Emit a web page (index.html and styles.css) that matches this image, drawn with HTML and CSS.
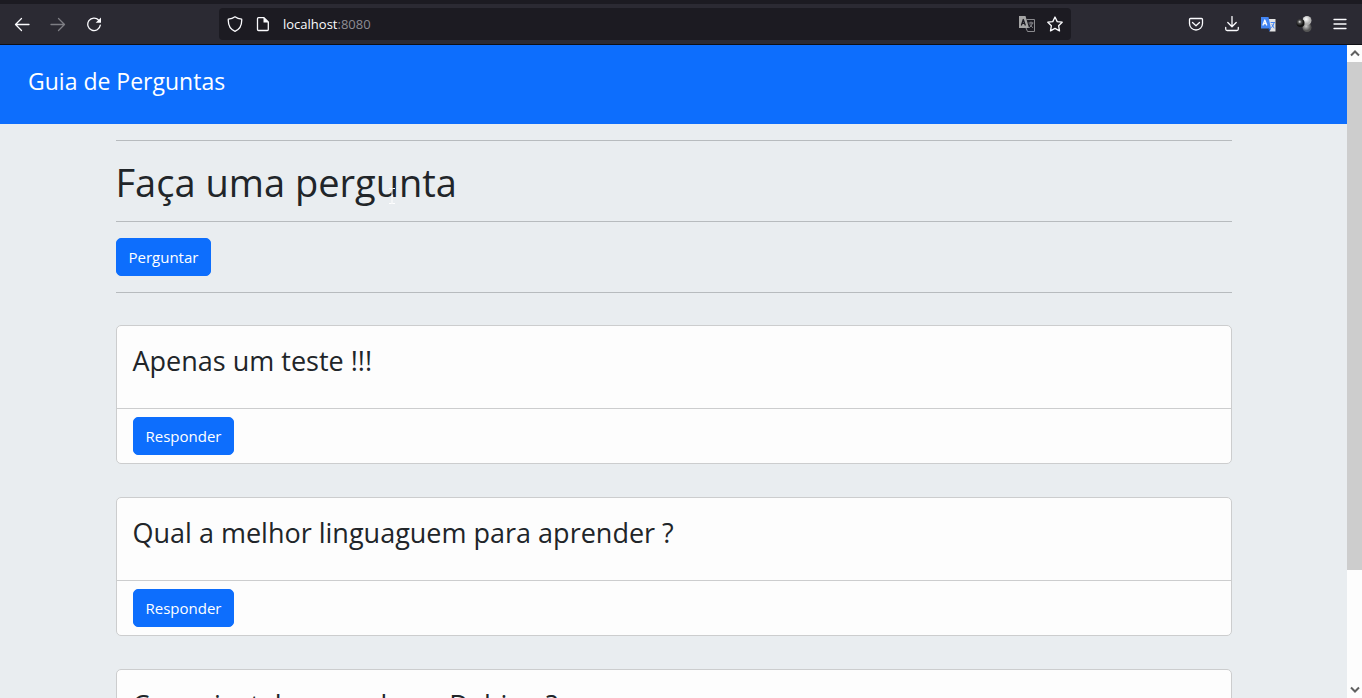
FILE: index.html
```html
<!DOCTYPE html>
<html lang="pt-br">
<head>
    <meta charset="UTF-8">
    <meta name="viewport" content="width=device-width, initial-scale=1.0">
    <title>Guia de Perguntas</title>
    <link rel="stylesheet" href="styles.css">
</head>
<body>

<div class="toolbar">
    <div class="nav-buttons">
        <button type="button" aria-label="Voltar">
            <svg width="16" height="16" viewBox="0 0 16 16"><path d="M15 8.500H1.500M7.500 2.500L1.500 8.500L7.500 14.500"/></svg>
        </button>
        <button type="button" class="disabled" aria-label="Avançar">
            <svg width="16" height="16" viewBox="0 0 16 16"><path d="M1 8.500H14.500M8.500 2.500L14.500 8.500L8.500 14.500"/></svg>
        </button>
        <button type="button" aria-label="Recarregar">
            <svg width="16" height="16" viewBox="0 0 16 16"><path d="M12.800 4.200A6.300 6.300 0 1 0 14.300 9.200"/><path class="arrow" d="M15 1.500V6.800H9.700Z"/></svg>
        </button>
    </div>
    <div class="urlbar">
        <svg width="16" height="16" viewBox="0 0 16 16"><path d="M8 .8C6 2.300 3.500 3 1.300 3.200C1 9 3.300 13.500 8 15.300C12.700 13.500 15 9 14.700 3.200C12.500 3 10 2.300 8 .8Z"/></svg>
        <svg width="16" height="16" viewBox="0 0 16 16"><path d="M3.500 1.700H9L13.300 6V13.500Q13.300 14.500 12.300 14.500H3.500Q2.500 14.500 2.500 13.500V2.700Q2.500 1.700 3.500 1.700Z"/><path class="arrow" d="M8.500 1.500V6.500H13.500Z"/></svg>
        <span class="url">localhost<span class="port">:8080</span></span>
        <button type="button" aria-label="Traduzir">
            <svg width="16" height="16" viewBox="0 0 16 16"><path class="tr-back" d="M8 3.500H15.500V15.500H8.500L7 12"/><path class="tr-front" d="M0 0H6.500L10 12H0Z"/><path class="tr-letter" d="M2.500 9L4.300 3.500L6.200 9M3.200 7.300H5.600"/><path class="tr-sign" d="M10 7H14M12 6V7M13.500 7Q13 10 10.500 11.500M11 8.500L13.500 11.500"/></svg>
        </button>
        <button type="button" aria-label="Favoritos">
            <svg width="16" height="16" viewBox="0 0 16 16"><path d="M8 1L10.200 5.600L15.200 6.200L11.600 9.700L12.500 14.900L8 12.400L3.500 14.900L4.400 9.700L.8 6.200L5.800 5.600Z"/></svg>
        </button>
    </div>
    <div class="tools">
        <button type="button" aria-label="Pocket">
            <svg width="16" height="16" viewBox="0 0 16 16"><path d="M2.500 2.500H13.500Q14.500 2.500 14.500 3.500V7.500A6.500 6.500 0 0 1 1.500 7.500V3.500Q1.500 2.500 2.500 2.500ZM4.500 6.500L8 9.700L11.500 6.500"/></svg>
        </button>
        <button type="button" aria-label="Downloads">
            <svg width="16" height="16" viewBox="0 0 16 16"><path d="M8 .5V10.500M3.800 6.500L8 10.700L12.200 6.500M1.700 11.500V13Q1.700 14.500 3.200 14.500H12.800Q14.300 14.500 14.300 13V11.500"/></svg>
        </button>
        <button type="button" aria-label="Tradutor">
            <svg width="16" height="16" viewBox="0 0 16 16"><path class="tb-back" d="M8 3H15.500V15.500H9.500Z"/><path class="tb-front" d="M1 1H8.500L11 12.500H1Z"/><path class="tb-fold" d="M8 12.500H11L9.500 15.500Z"/><path class="tb-letter" d="M3 9L4.800 4L6.700 9M3.700 7.500H6"/><path class="tb-sign" d="M11 6.500H14.500M14 7Q13.500 10 11.500 11.500M12 8.500L14 12"/></svg>
        </button>
        <button type="button" aria-label="Extensão">
            <svg class="balls" width="16" height="16" viewBox="0 0 16 16">
                <defs>
                    <radialGradient id="white" cx="40%" cy="35%"><stop offset="0" stop-color="#fff"/><stop offset="1" stop-color="#b0b0b0"/></radialGradient>
                    <radialGradient id="gray" cx="40%" cy="35%"><stop offset="0" stop-color="#ccc"/><stop offset="1" stop-color="#555"/></radialGradient>
                    <radialGradient id="black" cx="40%" cy="35%"><stop offset="0" stop-color="#eee"/><stop offset=".4" stop-color="#555"/><stop offset="1" stop-color="#111"/></radialGradient>
                </defs>
                <circle cx="11" cy="11.500" r="4.500" fill="url(#gray)"/>
                <circle cx="11" cy="4.500" r="4.500" fill="url(#white)"/>
                <circle cx="4.500" cy="7" r="4" fill="url(#black)"/>
            </svg>
        </button>
        <button type="button" aria-label="Menu">
            <svg width="16" height="16" viewBox="0 0 16 16"><path d="M2 3.500H14M2 8H14M2 12.500H14"/></svg>
        </button>
    </div>
</div>

<div class="window">
    <div class="page">
        <nav class="navbar">
            <a class="navbar-brand" href="/">Guia de Perguntas</a>
        </nav>

        <div class="container">
            <hr>
            <h1>Faça uma pergunta<svg class="cursor" width="8" height="16" viewBox="0 0 8 16"><path d="M1 .5H3.500L4 1L4.500 .5H7M4 1V15M1 15.500H3.500L4 15L4.500 15.500H7"/></svg></h1>
            <hr>
            <a class="btn" href="/perguntar">Perguntar</a>
            <hr>

            <div class="card">
                <div class="card-body">
                    <h3>Apenas um teste !!!</h3>
                </div>
                <div class="card-footer">
                    <a class="btn" href="/pergunta/3">Responder</a>
                </div>
            </div>

            <div class="card">
                <div class="card-body">
                    <h3>Qual a melhor linguaguem para aprender ?</h3>
                </div>
                <div class="card-footer">
                    <a class="btn" href="/pergunta/2">Responder</a>
                </div>
            </div>

            <div class="card">
                <div class="card-body">
                    <h3>Como instalar o node no Debian ?</h3>
                </div>
                <div class="card-footer">
                    <a class="btn" href="/pergunta/1">Responder</a>
                </div>
            </div>
        </div>
    </div>

    <div class="scrollbar">
        <svg width="15" height="17" viewBox="0 0 15 17"><path d="M4 10.500L8 6.500L12 10.500"/></svg>
        <div class="track"><div class="thumb"></div></div>
        <svg width="15" height="17" viewBox="0 0 15 17"><path d="M4 6.500L8 10.500L12 6.500"/></svg>
    </div>
</div>

</body>
</html>
```
FILE: styles.css
```css
* {
    box-sizing: border-box;
}
body {
    margin: 0;
    height: 100vh;
    display: flex;
    flex-direction: column;
    overflow: hidden;
    font-family: "Segoe UI", "Open Sans", "Noto Sans", sans-serif;
    font-size: 16px;
    line-height: 24px;
    color: #212529;
    background-color: #e9edf0;
}
/* Browser toolbar */
.toolbar {
    flex: none;
    display: flex;
    align-items: center;
    justify-content: space-between;
    height: 45px;
    padding: 0 14px;
    background-color: #2b2a33;
    border-top: 4px solid #1c1b22;
    border-bottom: 1px solid #0f0f14;
}
.toolbar button {
    display: flex;
    padding: 0;
    border: none;
    background: none;
    cursor: pointer;
}
.toolbar svg {
    flex: none;
    fill: none;
    stroke: #fbfbfe;
    stroke-width: 1.3;
    stroke-linejoin: round;
    stroke-linecap: round;
}
.toolbar .arrow {
    fill: #fbfbfe;
    stroke: none;
}
.toolbar .balls {
    stroke: none;
}
.toolbar .disabled {
    opacity: 0.4;
}
.nav-buttons,
.tools {
    display: flex;
    gap: 20px;
}
.urlbar {
    display: flex;
    align-items: center;
    gap: 12px;
    flex: 0 1 852px;
    height: 32px;
    padding: 0 8px;
    border-radius: 4px;
    background-color: #1c1b22;
}
.url {
    flex: 1;
    font-size: 13px;
    color: #fbfbfe;
}
.port {
    color: #8d8c94;
}
/* Translate icons */
.toolbar .tr-back {
    stroke: #8a8a8e;
    stroke-width: 1;
}
.toolbar .tr-front {
    fill: #a5a5a5;
    stroke: none;
}
.toolbar .tr-letter {
    stroke: #1c1b22;
}
.toolbar .tr-sign {
    stroke: #8a8a8e;
    stroke-width: 1;
}
.toolbar .tb-back {
    fill: #e4e4e4;
    stroke: none;
}
.toolbar .tb-front {
    fill: #4285f4;
    stroke: none;
}
.toolbar .tb-fold {
    fill: #1a4fb0;
    stroke: none;
}
.toolbar .tb-sign {
    stroke: #4285f4;
    stroke-width: 1;
}
/* Page area */
.window {
    flex: 1;
    display: flex;
    min-height: 0;
}
.page {
    flex: 1;
    overflow: hidden;
}
.navbar {
    padding: 20px 28px 27px;
    background-color: #0d6efd;
}
.navbar-brand {
    display: block;
    font-size: 23px;
    line-height: 32px;
    color: #fff;
    text-decoration: none;
}
.container {
    max-width: 1140px;
    margin: 0 auto;
    padding: 0 12px;
}
hr {
    margin: 16px 0;
    border: none;
    border-top: 1px solid #b7bbbe;
}
h1 {
    position: relative;
    margin: 0;
    padding-top: 2px;
    font-size: 38px;
    font-weight: 400;
    line-height: 46px;
}
.cursor {
    position: absolute;
    left: 272px;
    top: 31px;
    fill: none;
    stroke: #fff;
}
.btn {
    display: inline-block;
    padding: 6px 12px;
    border: 1px solid #0d6efd;
    border-radius: 5px;
    font-size: 15px;
    color: #fff;
    text-decoration: none;
    background-color: #0d6efd;
    vertical-align: top;
}
/* Question cards */
.card {
    margin: 32px 0 33px;
    border: 1px solid #cccdce;
    border-radius: 5px;
    background-color: #fdfdfd;
}
.card-body {
    padding: 18px 16px 30px;
}
.card-body h3 {
    margin: 0;
    font-size: 27px;
    font-weight: 400;
    line-height: 34px;
}
.card-footer {
    padding: 8px 16px;
    border-top: 1px solid #cccdce;
}
/* Scrollbar */
.scrollbar {
    display: flex;
    flex-direction: column;
    width: 15px;
    background-color: #fdfdfd;
}
.scrollbar svg {
    fill: none;
    stroke: #606060;
    stroke-width: 2;
}
.track {
    flex: 1;
}
.thumb {
    height: 82%;
    background-color: #cdcdcd;
}
```
